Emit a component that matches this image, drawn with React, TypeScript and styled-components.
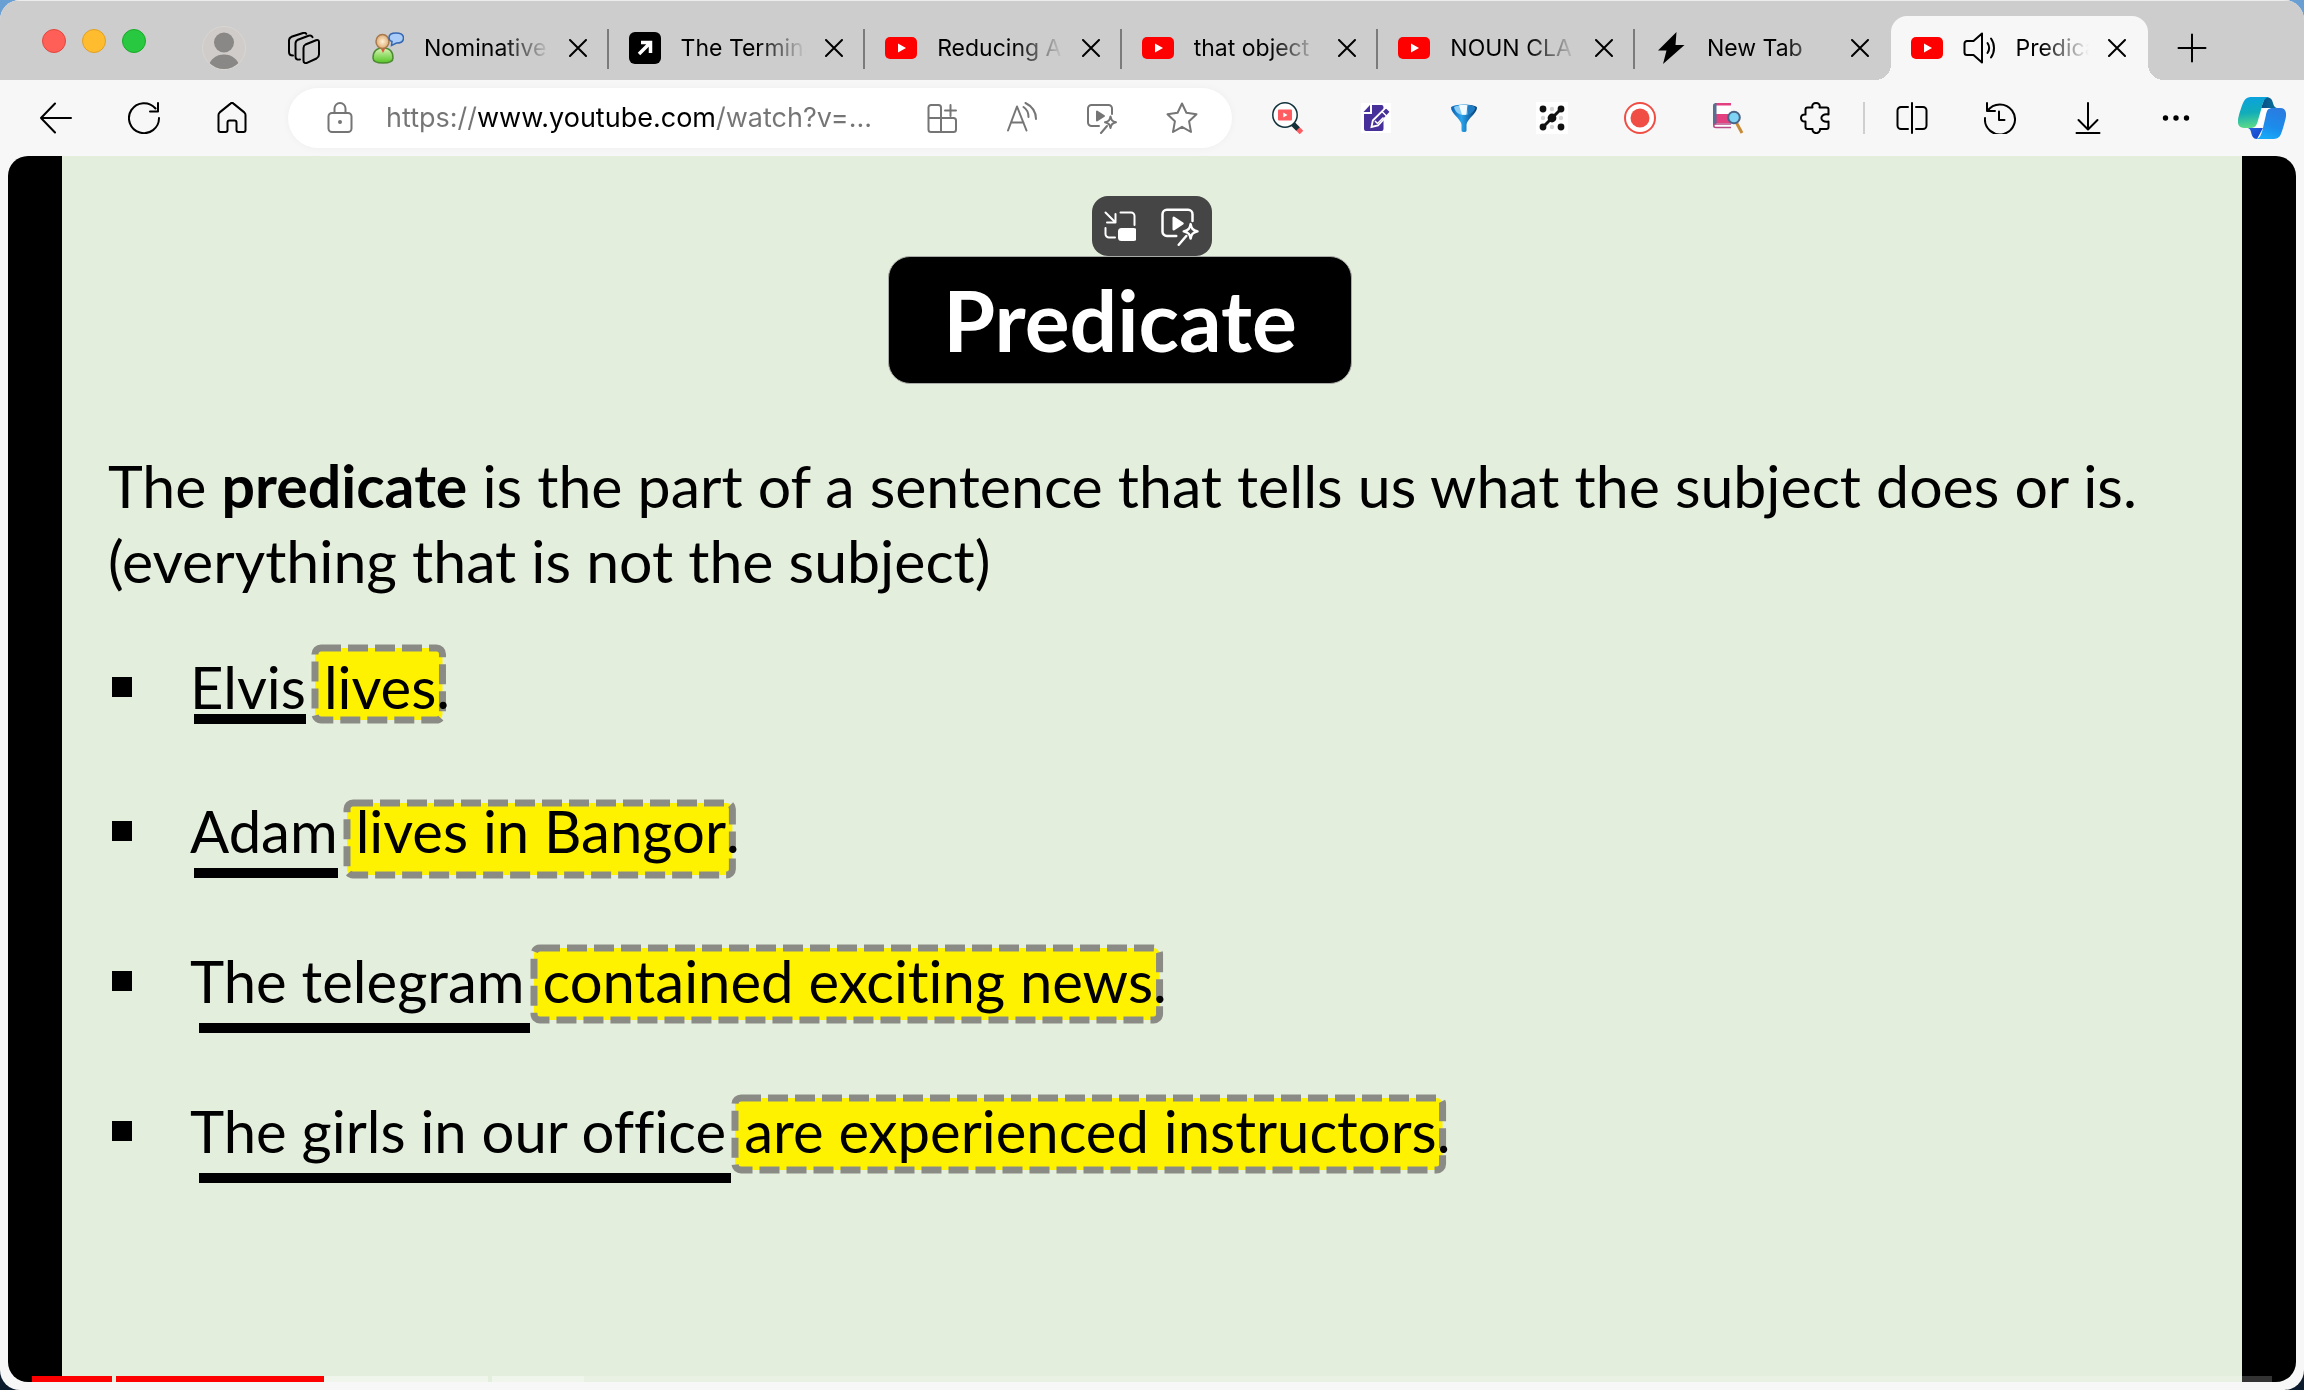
import React, { type ReactNode } from "react";
import styled, { createGlobalStyle } from "styled-components";

/* ---------- tokens ---------- */
const ui = `Inter, "Liberation Sans", sans-serif`;
const slideFont = `Lato, "Open Sans", sans-serif`;
const chrome = "#cdcdcd";
const surface = "#f7f7f7";
const ink = "#000";
const muted = "#757575";

const Global = createGlobalStyle`
  *, *::before, *::after { box-sizing: border-box; }
  html, body { margin: 0; height: 100%; }
  body {
    background: linear-gradient(#6a9fd4 0 50%, #0b1a2c 50%);
    font-family: ${ui};
    color: ${ink};
    overflow: hidden;
  }
  button { border: 0; padding: 0; background: none; color: inherit; font: inherit; }
  ul { margin: 0; padding: 0; list-style: none; }
`;

/* ---------- window ---------- */
const BrowserWindow = styled.div`
  display: flex;
  flex-direction: column;
  height: 100vh;
  border-radius: 20px;
  overflow: hidden;
  background: ${surface};
`;

const TitleBar = styled.header`
  display: flex;
  align-items: center;
  height: 80px;
  flex: none;
  padding: 16px 0 0 42px;
  background: ${chrome};
  box-shadow: inset 0 1px 0 #ececec;
`;

const WindowControls = styled.div`
  display: flex;
  gap: 16px;
  align-self: flex-start;
  padding-top: 13px;
`;

const Light = styled.button<{ $fill: string; $edge: string }>`
  width: 24px;
  height: 24px;
  border-radius: 50%;
  border: 1px solid ${(p) => p.$edge};
  background: ${(p) => p.$fill};
`;

const Avatar = styled.button`
  width: 44px;
  height: 44px;
  margin-left: 56px;
  border-radius: 50%;
  overflow: hidden;
  border: 1px solid #dad7d3;
  background: #cfccc9;
  svg { display: block; }
`;

const Workspaces = styled.button`
  display: flex;
  width: 32px;
  margin: 0 32px 0 42px;
`;

/* ---------- tabs ---------- */
const TabStrip = styled.div`
  display: flex;
  flex: 1;
  min-width: 0;
  align-self: stretch;
`;

const Tab = styled.div<{ $active?: boolean; $last?: boolean }>`
  position: relative;
  display: flex;
  align-items: center;
  flex: 1 1 0;
  min-width: 0;
  padding: 0 15px 0 20px;
  border-radius: 16px 16px 0 0;
  background: ${(p) => (p.$active ? surface : "transparent")};

  ${(p) =>
    p.$active
      ? `
  &::before, &::after {
    content: "";
    position: absolute;
    bottom: 0;
    width: 16px;
    height: 16px;
  }
  &::before { right: 100%; background: radial-gradient(circle at 0 0, transparent 16px, ${surface} 16px); }
  &::after { left: 100%; background: radial-gradient(circle at 100% 0, transparent 16px, ${surface} 16px); }`
      : p.$last
        ? ""
        : `
  &::after {
    content: "";
    position: absolute;
    right: 0;
    top: 13px;
    width: 2px;
    height: 40px;
    background: #7b7b7b;
  }`}
`;

const Favicon = styled.span`
  display: flex;
  flex: none;
  width: 32px;
  margin-right: 20px;
`;

const TabTitle = styled.span`
  flex: 1;
  min-width: 0;
  overflow: hidden;
  white-space: nowrap;
  font-size: 23px;
  line-height: 32px;
  mask-image: linear-gradient(90deg, #000 calc(100% - 48px), transparent);
`;

const CloseButton = styled.button`
  display: flex;
  justify-content: center;
  align-items: center;
  flex: none;
  width: 32px;
  height: 32px;
  margin-left: 12px;
`;

const NewTabButton = styled.button`
  display: flex;
  justify-content: center;
  width: 88px;
  margin-right: 68px;
`;

/* ---------- toolbar ---------- */
const Toolbar = styled.nav`
  display: flex;
  align-items: center;
  flex: none;
  height: 76px;
  padding-left: 12px;
`;

const ToolButton = styled.button<{ $width?: number }>`
  display: flex;
  justify-content: center;
  align-items: center;
  flex: none;
  width: ${(p) => p.$width ?? 88}px;
  height: 60px;
`;

const Divider = styled.span`
  flex: none;
  width: 2px;
  height: 32px;
  margin: 0 3px;
  background: #cfcfcf;
`;

const AddressBar = styled.form`
  display: flex;
  align-items: center;
  flex: 1;
  min-width: 0;
  height: 60px;
  margin: 0 12px;
  padding: 0 10px 0 36px;
  border-radius: 30px;
  background: #fff;
  color: ${muted};
  box-shadow: 0 0 8px #0000000a;
`;

const AddressLabel = styled.label`
  display: flex;
  flex: none;
  width: 32px;
  margin-right: 30px;
`;

const AddressInput = styled.input`
  flex: 1;
  min-width: 0;
  height: 40px;
  padding: 0;
  border: 0;
  outline: 0;
  font: 27px / 40px ${ui};
  color: transparent;
  background: linear-gradient(90deg, ${muted} 92px, ${ink} 92px 331px, ${muted} 331px);
  background-clip: text;
  -webkit-background-clip: text;
`;

/* ---------- video ---------- */
const Player = styled.main`
  position: relative;
  display: flex;
  flex: 1;
  min-height: 0;
  margin: 0 8px 8px;
  padding: 0 54px;
  border-radius: 20px;
  overflow: hidden;
  background: #000;
`;

const Slide = styled.article`
  flex: 1;
  padding: 100px 46px 0;
  background: #e4eedd;
  font: 58px / 75px ${slideFont};
  font-variant-ligatures: none;
`;

const SlideHeader = styled.div`
  display: flex;
  justify-content: center;
  padding-right: 64px;
`;

const SlideTitle = styled.h1`
  margin: 0;
  padding: 0 54px;
  border: 1px solid #a9aba6;
  border-radius: 22px;
  background: #000;
  color: #fff;
  font: 700 84px / 126px ${slideFont};
`;

const Definition = styled.p`
  margin: 64px 0 51px;
  font-size: 59px;
`;

const Example = styled.li`
  display: flex;
  align-items: center;
  padding-left: 4px;
  & + & { margin-top: 75px; }
  &:nth-child(2) { margin-top: 69px; }
`;

const Bullet = styled.span`
  width: 20px;
  height: 20px;
  margin-right: 58px;
  background: ${ink};
`;

const Subject = styled.span<{ $rule: number; $inset: number }>`
  position: relative;
  &::after {
    content: "";
    position: absolute;
    left: ${(p) => p.$inset}px;
    right: ${(p) => 4 - p.$inset}px;
    top: ${(p) => p.$rule}px;
    height: 10px;
    background: ${ink};
  }
`;

const Predicate = styled.mark<{ $top: number }>`
  position: relative;
  margin-left: 6px;
  padding: 0 9px 0 12px;
  background: none;
  color: inherit;
  svg {
    position: absolute;
    left: 0;
    top: ${(p) => p.$top}px;
    width: 100%;
    height: 78px;
    overflow: visible;
  }
  rect {
    x: 3px;
    y: 3px;
    width: calc(100% - 6px);
    height: 72px;
    rx: 6px;
    fill: #fff200;
    stroke: #8b8b86;
    stroke-width: 7px;
    stroke-dasharray: 20 7;
  }
`;

const Front = styled.span`
  position: relative;
`;

const Stop = styled.span`
  position: relative;
  margin-left: -9px;
`;

const HoverControls = styled.div`
  position: absolute;
  left: 50%;
  top: 40px;
  display: flex;
  width: 120px;
  height: 60px;
  margin-left: -60px;
  border-radius: 16px;
  background: #444544;
  color: #fff;
`;

const Progress = styled.div`
  position: absolute;
  left: 24px;
  right: 24px;
  bottom: 0;
  display: flex;
  gap: 4px;
  height: 6px;
`;

const Chapter = styled.div<{ $width?: number; $played: number; $loaded: number }>`
  flex: ${(p) => (p.$width ? `0 0 ${p.$width}px` : "1")};
  background: linear-gradient(
    90deg,
    #f00 ${(p) => p.$played}px,
    #ffffff73 ${(p) => p.$played}px ${(p) => p.$loaded}px,
    #ffffff33 ${(p) => p.$loaded}px
  );
`;

/* ---------- icons ---------- */
const Line = ({ children, size = 32, box = size }: { children: ReactNode; size?: number; box?: number }) => (
  <svg width={size} height={size} viewBox={`0 0 ${box} ${box}`} fill="none" stroke="currentColor" strokeWidth={2} strokeLinecap="round" strokeLinejoin="round" aria-hidden="true">
    {children}
  </svg>
);

const CloseIcon = () => <Line size={18}><path d="M1 1l16 16M17 1L1 17" /></Line>;

const YouTubeIcon = () => (
  <svg width="32" height="32" viewBox="0 0 32 32" aria-hidden="true">
    <rect y="5" width="32" height="22" rx="5" fill="#f00" />
    <path d="M13 11.500v9l8-4.500z" fill="#fff" />
  </svg>
);

const PersonIcon = () => (
  <svg width="32" height="32" viewBox="0 0 32 32" aria-hidden="true">
    <defs>
      <linearGradient id="shirt" x2="0" y2="1"><stop stopColor="#d9f5b8" /><stop offset="1" stopColor="#55c522" /></linearGradient>
      <radialGradient id="face"><stop stopColor="#fff1d8" /><stop offset="1" stopColor="#e0ac72" /></radialGradient>
    </defs>
    <path d="M1 26c0-6 3-10 10-10s10 4 10 10c0 3.500-4 5-10 5S1 29.500 1 26z" fill="url(#shirt)" stroke="#4d8a33" strokeWidth="1.500" />
    <path d="M8.500 16h5L11 21z" fill="#e2553c" />
    <ellipse cx="10.500" cy="9.500" rx="6.500" ry="7" fill="url(#face)" stroke="#a8794c" strokeWidth="1.500" />
    <path d="M17 5.500C17 2 20 1 24 1s7.500 1 7.500 5-3 5-7 5l-5 2.500.5-4C18 9 17 8 17 5.500z" fill="#a9cdf8" stroke="#3767b0" strokeWidth="1.500" />
  </svg>
);

const ArrowTileIcon = () => (
  <svg width="32" height="32" viewBox="0 0 32 32" aria-hidden="true">
    <rect width="32" height="32" rx="6" fill="#000" />
    <path d="M10 22L21.500 10.500M12 10.500h9.500V21" fill="none" stroke="#fff" strokeWidth="3.500" />
  </svg>
);

const BoltIcon = () => (
  <svg width="32" height="32" viewBox="0 0 32 32" aria-hidden="true">
    <path d="M21.500 0L3 18.500h8.500L8 32 29.500 13h-9z" fill="#000" />
  </svg>
);

const SpeakerIcon = () => (
  <Line>
    <path d="M19 1.500v29L10.500 23H4a2.500 2.500 0 01-2.500-2.500v-9A2.500 2.500 0 014 9h6.500zM24.500 11c2 3 2 7 0 10M28 6.500c4 5.500 4 13.500 0 19" />
  </Line>
);

const StackIcon = () => (
  <Line>
    <path d="M17.500 12.500l10.500-4.300c2-.7 3 .2 3 2V22.500c0 2-.8 3-2.500 4l-9 4.200c-2 1-4 .3-4-2V16c0-1.800.6-2.700 2-3.500zM12 27.500c-3 .5-4.500-.5-4.500-3V11.500c0-2 1-3 2.500-3.800l10.500-4c2-.6 3.300 0 4 1.500M5 23.500c-3 0-4-1.500-4-3.500V8.500C1 6.500 2 5.500 3.500 4.800L15 1c1.500-.4 2.600-.2 3.200.8" />
  </Line>
);

const SuperResIcon = ({ size = 32 }: { size?: number }) => (
  <Line size={size} box={32}>
    <path d="M13 24H5.500A3.500 3.500 0 012 20.500v-14A3.500 3.500 0 015.500 3h17A3.500 3.500 0 0126 6.500V12M15 31l6-7" />
    <path d="M24.500 14.500c.7 3.500 1.500 4.800 5.500 5.800-4 1-4.800 2.200-5.500 5.700-.7-3.500-1.500-4.700-5.500-5.700 4-1 4.800-2.300 5.500-5.800z" />
    <path d="M11 9.500v9l7-4.500z" fill="currentColor" />
  </Line>
);

const FindVideoIcon = () => (
  <svg width="32" height="32" viewBox="0 0 32 32" aria-hidden="true">
    <circle cx="13" cy="13" r="12.200" fill="#fff" stroke="#12323b" strokeWidth="1.500" />
    <rect x="6" y="7.500" width="14" height="11" rx="1" fill="#ff5c62" />
    <path d="M11.300 10.500v5l4.200-2.500z" fill="#fff" />
    <path d="M21.500 22.500l8 8" stroke="#ff5c62" strokeWidth="5" />
    <path d="M21 22l5 5" stroke="#12323b" strokeWidth="5" />
  </svg>
);

const EditDocIcon = () => (
  <svg width="32" height="32" viewBox="0 0 32 32" aria-hidden="true">
    <rect x="1" y="1" width="30" height="30" fill="#fff" />
    <path d="M12 3h9.500a2 2 0 012 2v22a2 2 0 01-2 2H6a2 2 0 01-2-2V12h8z" fill="#47309a" />
    <path d="M10 3v7H3.500z" fill="#47309a" />
    <path d="M11.500 25l1.300-6.500L25 6.300a1.500 1.500 0 012.200 0l2.500 2.500a1.500 1.500 0 010 2.200L18 23.500z" fill="#47309a" stroke="#fff" strokeWidth="1.800" />
    <path d="M22 9.500l4.500 4.500M15 19l2.500 2.500 6-6" fill="none" stroke="#fff" strokeWidth="1.500" />
  </svg>
);

const FunnelIcon = () => (
  <svg width="32" height="32" viewBox="0 0 32 32" aria-hidden="true">
    <defs><linearGradient id="funnel"><stop stopColor="#0a5fae" /><stop offset=".4" stopColor="#2aa4ee" /><stop offset="1" stopColor="#04386f" /></linearGradient></defs>
    <path d="M3 5.500c2-4 24-4 26 0 0 6-9.500 11-10.500 17v6c0 2-5 2-5 0v-6C12.500 16.500 3 11.500 3 5.500z" fill="url(#funnel)" />
    <path d="M6 5c4-2.500 16-2.500 20 0-1 5-5 8-10 8S7 10 6 5z" fill="#8ccdf6" />
    <path d="M19 3.300c4 .2 6 .8 8.500 2.200-1 4-4 6.500-8 7.200z" fill="#1d7cc4" />
    <path d="M11 3.300c3-.3 6-.3 8.500 0l-1.500 9.500-4 0z" fill="#f2fbff" />
  </svg>
);

const GridDotsIcon = () => (
  <svg width="32" height="32" viewBox="0 0 32 32" aria-hidden="true">
    <rect width="32" height="32" fill="#fff" />
    <g fill="#d6d6d6"><circle cx="16" cy="7" r="2.200" /><circle cx="7" cy="16" r="2.200" /><circle cx="25" cy="16" r="2.200" /><circle cx="16" cy="25" r="2.200" /></g>
    <path d="M7 25L25 7" stroke="#111" strokeWidth="3" />
    <g fill="#111"><circle cx="7" cy="7" r="3.400" /><circle cx="25" cy="7" r="3.400" /><circle cx="16" cy="16" r="4.400" /><circle cx="7" cy="25" r="3.400" /><circle cx="25" cy="25" r="3.400" /></g>
  </svg>
);

const RecordIcon = () => (
  <svg width="32" height="32" viewBox="0 0 32 32" aria-hidden="true">
    <circle cx="16" cy="16" r="15" fill="#fff" stroke="#f04e44" strokeWidth="2" />
    <circle cx="16" cy="16" r="9.500" fill="#f04e44" />
  </svg>
);

const BookSearchIcon = () => (
  <svg width="32" height="32" viewBox="0 0 32 32" aria-hidden="true">
    <path d="M3 1h16v24H3z" fill="#fff" />
    <path d="M3 1h16v2.500H3zM4 12h15v9H4z" fill="#e2407f" />
    <path d="M1 3.500C1 2 2 1 4.500 1v21C2.500 22 1 23 1 25z" fill="#5a6d92" />
    <path d="M19 22H4c-3 0-3 3.500 0 3.500h15" fill="none" stroke="#b84b86" strokeWidth="1.500" />
    <path d="M24 20l6 11" stroke="#c98a35" strokeWidth="3" />
    <circle cx="22" cy="15.500" r="5.800" fill="#7fd3f5" stroke="#4a6486" strokeWidth="2" />
  </svg>
);

const CopilotIcon = () => (
  <svg width="48" height="42" viewBox="0 0 48 42" aria-hidden="true">
    <defs>
      <linearGradient id="leafA" x1=".4" x2=".5" y2="1"><stop stopColor="#0aa2de" /><stop offset=".5" stopColor="#12adb9" /><stop offset="1" stopColor="#5fdc86" /></linearGradient>
      <linearGradient id="leafB" x1=".7" x2=".4" y2="1"><stop stopColor="#2b7be0" /><stop offset=".6" stopColor="#1b8ceb" /><stop offset="1" stopColor="#18aaf8" /></linearGradient>
      <linearGradient id="foldA" x2="1"><stop stopColor="#0a4e86" /><stop offset="1" stopColor="#07769e" /></linearGradient>
      <linearGradient id="foldB" x2="1" y2="1"><stop stopColor="#2262df" /><stop offset="1" stopColor="#123fc8" /></linearGradient>
    </defs>
    <path d="M12 31h13l-6 11c-4 0-5-3-6-7-.6-2.500-1-3-3-4z" fill="url(#foldB)" />
    <path d="M27 0c6 0 7 2.500 8 6 1 3.500 2 5 5 5H23z" fill="url(#foldA)" />
    <path d="M14 0h17c-5 1-6 5-7.500 11l-4 14c-1.300 4.500-3.500 6-7.500 6H6c-6 0-7-5-5.500-11C2 14 4 8 5.500 5 7.500 1 10 0 14 0z" fill="url(#leafA)" />
    <path d="M29 11h13c6 0 7 5 5.500 11-1.500 6-3 11-4.500 15-1.600 3.800-4.500 5-8.500 5H17c5 0 6-4 7.500-9l3-13c1-4 1-9 6-9z" fill="url(#leafB)" />
    <path d="M35 11h-5c-4 0-5.500 1.500-6.500 5l-3 10c-1 3.500-2.500 5-6 5h4.500c4 0 5.500-2 6.500-6l2.500-9c1-3.500 2.500-5 7-5z" fill="#fff" />
  </svg>
);

/* ---------- data ---------- */
const tabs: { title: string; icon: ReactNode; audio?: boolean; active?: boolean }[] = [
  { title: "Nominative", icon: <PersonIcon /> },
  { title: "The Termina", icon: <ArrowTileIcon /> },
  { title: "Reducing A", icon: <YouTubeIcon /> },
  { title: "that object", icon: <YouTubeIcon /> },
  { title: "NOUN CLA", icon: <YouTubeIcon /> },
  { title: "New Tab", icon: <BoltIcon /> },
  { title: "Predica", icon: <YouTubeIcon />, audio: true, active: true },
];

const extensions: [string, ReactNode][] = [
  ["Video search", <FindVideoIcon />],
  ["Notes", <EditDocIcon />],
  ["Funnel", <FunnelIcon />],
  ["Grid", <GridDotsIcon />],
  ["Recorder", <RecordIcon />],
  ["Dictionary", <BookSearchIcon />],
  [
    "Extensions",
    <Line>
      <path d="M5.500 7.500A2 2 0 017.500 5.500H12.500C10.500 -.500 21.500 -.500 19.500 5.500H26.500a2 2 0 012 2V12.500C19 10.500 19 21.500 28.500 19.500V25a2 2 0 01-2 2H20C20.500 32.500 12 32.500 12.500 27H7.500a2 2 0 01-2-2v-5.500C-.500 20.500 -.500 11.500 5.500 12.500z" />
    </Line>,
  ],
];

const browserTools: [string, ReactNode][] = [
  ["Split screen", <Line><path d="M16 1v30M12 5H5a3.500 3.500 0 00-3.500 3.500v15A3.500 3.500 0 005 27h7M20 5h7a3.500 3.500 0 013.500 3.500v15A3.500 3.500 0 0127 27h-7" /></Line>],
  ["History", <Line><path d="M3 1v8h8M3.500 9A15 15 0 111 16M15 9.500V18h5.500" /></Line>],
  ["Downloads", <Line><path d="M16 1v26M6.500 18l9.500 9.500 9.500-9.500M4.500 31h23" /></Line>],
  [
    "More",
    <svg width="32" height="32" viewBox="0 0 32 32" aria-hidden="true">
      <circle cx="5.500" cy="16" r="2.700" /><circle cx="16" cy="16" r="2.700" /><circle cx="26.500" cy="16" r="2.700" />
    </svg>,
  ],
];

const addressTools: [string, ReactNode][] = [
  ["Add app", <Line><path d="M2.500 16V5.500a2.500 2.500 0 012.500-2.500h7.500a2.500 2.500 0 012.500 2.500V30M2.500 16h25a2.500 2.500 0 012.500 2.500v9a2.500 2.500 0 01-2.500 2.500H5a2.500 2.500 0 01-2.500-2.500zM24.500 3v11M19 8.500h11" /></Line>],
  ["Read aloud", <Line><path d="M2 28.500l9-24 9.500 24M5 20.500h12.500M17.500 5c3 2 5 5.500 5 10M19.500 1c6 3 10.500 8.500 10.500 16" /></Line>],
  ["Enhance video", <SuperResIcon />],
  ["Favourite", <Line><path d="M16 1.500l4.400 9.300 10.100 1.400-7.400 7.100 1.900 10.700-9-5.200L7 30l1.900-10.700L1.500 12.200l10.100-1.400z" /></Line>],
];

const examples = [
  { subject: "Elvis", predicate: "lives", rule: 65, inset: 4, top: -4 },
  { subject: "Adam", predicate: "lives in Bangor", rule: 75, inset: 4, top: 7 },
  { subject: "The telegram", predicate: "contained exciting news", rule: 80, inset: 9, top: 2 },
  { subject: "The girls in our office", predicate: "are experienced instructors", rule: 80, inset: 9, top: 2 },
];

export default function App() {
  return (
    <BrowserWindow>
      <Global />
      <TitleBar>
        <WindowControls>
          <Light $fill="#ff5f57" $edge="#e2463f" aria-label="Close window" />
          <Light $fill="#febc2e" $edge="#e0a023" aria-label="Minimise window" />
          <Light $fill="#28c840" $edge="#1aab29" aria-label="Zoom window" />
        </WindowControls>
        <Avatar aria-label="Profile">
          <svg width="42" height="42" viewBox="0 0 42 42" fill="#8a8886" aria-hidden="true">
            <circle cx="21" cy="15.500" r="10" />
            <path d="M5 41c2-9 8-13.500 16-13.500S35 32 37 41l-8 4H13z" />
          </svg>
        </Avatar>
        <Workspaces aria-label="Workspaces"><StackIcon /></Workspaces>
        <TabStrip>
          {tabs.map((t, i) => (
            <Tab key={t.title} $active={t.active} $last={i === tabs.length - 2}>
              <Favicon>{t.icon}</Favicon>
              {t.audio && <Favicon><SpeakerIcon /></Favicon>}
              <TabTitle>{t.title}</TabTitle>
              <CloseButton aria-label={`Close ${t.title}`}><CloseIcon /></CloseButton>
            </Tab>
          ))}
        </TabStrip>
        <NewTabButton aria-label="New tab"><Line><path d="M16 2.500v27M2.500 16h27" /></Line></NewTabButton>
      </TitleBar>

      <Toolbar>
        <ToolButton aria-label="Back"><Line><path d="M31 16H1M15 1.500L1 16l14 14.500" /></Line></ToolButton>
        <ToolButton aria-label="Reload"><Line><path d="M31 16A15 15 0 1127.500 6.500M30 1v8.500h-8" /></Line></ToolButton>
        <ToolButton aria-label="Home"><Line><path d="M2.500 13c0-1 .4-1.900 1.200-2.600L14.500 1.600a2.200 2.200 0 013 0l10.800 8.800c.8.700 1.200 1.600 1.200 2.600V28a2 2 0 01-2 2h-5a2 2 0 01-2-2v-7.500a2 2 0 00-2-2h-5a2 2 0 00-2 2V28a2 2 0 01-2 2h-5a2 2 0 01-2-2z" /></Line></ToolButton>
        <AddressBar onSubmit={(e) => e.preventDefault()}>
          <AddressLabel htmlFor="address" aria-label="Address">
            <Line><rect x="4.500" y="11" width="23" height="19" rx="3.500" /><path d="M10.500 11V6.500a5.500 5.500 0 0111 0V11" /><circle cx="16" cy="20" r="1" fill="currentColor" /></Line>
          </AddressLabel>
          <AddressInput id="address" defaultValue="https://www.youtube.com/watch?v=..." />
          {addressTools.map(([name, icon]) => (
            <ToolButton key={name} type="button" $width={80} aria-label={name}>{icon}</ToolButton>
          ))}
        </AddressBar>
        {extensions.map(([name, icon]) => <ToolButton key={name} aria-label={name}>{icon}</ToolButton>)}
        <Divider />
        {browserTools.map(([name, icon]) => <ToolButton key={name} aria-label={name}>{icon}</ToolButton>)}
        <ToolButton $width={84} aria-label="Copilot"><CopilotIcon /></ToolButton>
      </Toolbar>

      <Player>
        <Slide>
          <SlideHeader><SlideTitle>Predicate</SlideTitle></SlideHeader>
          <Definition>
            The <b>predicate</b> is the part of a sentence that tells us what the subject does or is.
            <br />
            (everything that is not the subject)
          </Definition>
          <ul>
            {examples.map((e) => (
              <Example key={e.subject}>
                <Bullet />
                <Subject $rule={e.rule} $inset={e.inset}>{e.subject}</Subject>
                <Predicate $top={e.top}>
                  <svg aria-hidden="true"><rect /></svg>
                  <Front>{e.predicate}</Front>
                </Predicate>
                <Stop>.</Stop>
              </Example>
            ))}
          </ul>
        </Slide>
        <HoverControls>
          <ToolButton $width={56} aria-label="Picture in picture">
            <Line>
              <path d="M1.500 2.500l9 9M11.500 4v8.500H3M16.500 2.500H27A3.500 3.500 0 0130.500 6v9M1.500 18v6A3.500 3.500 0 005 27.500h6" />
              <rect x="15" y="19" width="17" height="11" rx="2.500" fill="currentColor" />
            </Line>
          </ToolButton>
          <ToolButton $width={64} aria-label="Enhance playback"><SuperResIcon size={40} /></ToolButton>
        </HoverControls>
        <Progress>
          <Chapter $width={80} $played={80} $loaded={80} />
          <Chapter $width={372} $played={208} $loaded={372} />
          <Chapter $played={0} $loaded={92} />
        </Progress>
      </Player>
    </BrowserWindow>
  );
}
